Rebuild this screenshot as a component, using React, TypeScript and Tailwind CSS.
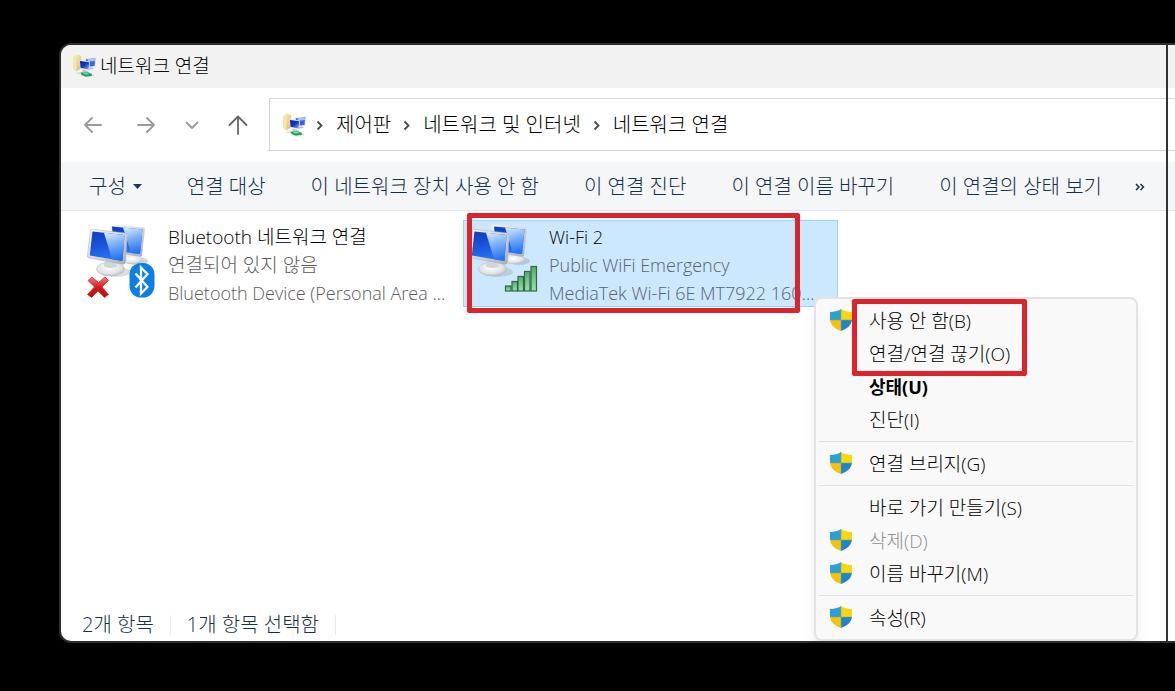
import React from "react";

function NetworkFolderIcon() {
  return (
    <svg width="24" height="24" viewBox="0 0 24 24" aria-hidden="true">
      <defs>
        <linearGradient id="folder" x1="0" y1="0" x2="1" y2="1">
          <stop offset="0" stopColor="#fff3c4" />
          <stop offset="1" stopColor="#dcb95a" />
        </linearGradient>
        <linearGradient id="smallScreen" x1="0" y1="0" x2="1" y2="1">
          <stop offset="0" stopColor="#0b1fa0" />
          <stop offset="0.5" stopColor="#1238c8" />
          <stop offset="1" stopColor="#8fb4f2" />
        </linearGradient>
      </defs>
      <path d="M1 2.500L5.500.5l3.500 1.500.5 12L4.500 17.500 1 15z" fill="url(#folder)" />
      <path d="M1 2.500l3 1.500.6 13.500L1 15z" fill="#f6e5ae" />
      <path d="M12.500 4.500l11.500-1-.8 9-9.700 1z" fill="#d3dcf2" />
      <path d="M14 5.200l9.200-.8-.7 7.600-8 .8z" fill="#3f66d6" />
      <path d="M15.500 5.100l7.700-.7-.2 2.500-7 .8z" fill="#a9c0f1" />
      <path d="M16 14l4-.8 2 1.500-5 1z" fill="#b6bfcd" />
      <path d="M7.500 6l10.500 1.500-.8 9L8 14.500z" fill="#dce3f0" />
      <path d="M8 7l9.200 1.200-.6 7.200-8.100-1.700z" fill="url(#smallScreen)" />
      <path d="M10.500 15.800l4 .8 2 1.200-6 .2z" fill="#b8c0cc" />
      <path d="M4.500 18.500h5l-.5 1.500H5zM18 21l4-.5v1.600l-4 .5z" fill="#c3ead9" />
      <path d="M8.500 18.500l7.500-.3 4 1.700-.4 2.100-6 .7-4-1.600z" fill="#1f9f60" />
      <path d="M10.500 19.200l4.500-.2 2.500 1-4 .5z" fill="#8ae0b2" />
    </svg>
  );
}

function ComputersIcon({ children }: { children?: React.ReactNode }) {
  return (
    <svg width="72" height="76" viewBox="0 0 72 76" className="shrink-0" aria-hidden="true">
      <defs>
        <linearGradient id="frame" x1="0" y1="0" x2="1" y2="1">
          <stop offset="0" stopColor="#f6f7f8" />
          <stop offset="0.5" stopColor="#d6d9dd" />
          <stop offset="1" stopColor="#a6abb2" />
        </linearGradient>
        <linearGradient id="screen" x1="0.3" y1="0" x2="0.5" y2="1">
          <stop offset="0" stopColor="#1140c0" />
          <stop offset="0.5" stopColor="#1a57dd" />
          <stop offset="1" stopColor="#2b78f0" />
        </linearGradient>
        <linearGradient id="shine" x1="0.2" y1="0" x2="0.4" y2="1">
          <stop offset="0" stopColor="#d6e8fd" />
          <stop offset="0.4" stopColor="#84b5fa" />
          <stop offset="1" stopColor="#2272f2" />
        </linearGradient>
        <radialGradient id="base" cx="0.45" cy="0.4" r="0.7">
          <stop offset="0" stopColor="#ffffff" />
          <stop offset="0.6" stopColor="#e0e2e5" />
          <stop offset="1" stopColor="#a8adb2" />
        </radialGradient>
        <linearGradient id="bars" x1="0" y1="0" x2="0" y2="1">
          <stop offset="0" stopColor="#5aa873" />
          <stop offset="1" stopColor="#9be0a8" />
        </linearGradient>
        <linearGradient id="cross" x1="0" y1="0" x2="0" y2="1">
          <stop offset="0" stopColor="#ee7a76" />
          <stop offset="0.5" stopColor="#d51a1a" />
          <stop offset="1" stopColor="#b80c0c" />
        </linearGradient>
      </defs>
      <ellipse cx="50" cy="37" rx="11" ry="4" fill="#9aa4ae" opacity="0.45" />
      <ellipse cx="45" cy="35.500" rx="11" ry="4.500" fill="url(#base)" />
      <path d="M23 1.500Q23 .5 24.500.5L56 3.500Q58 3.800 57.900 5.500L55 31Q54.700 33 53 32.800L27 29z" fill="url(#frame)" />
      <path d="M25 2.500l30.500 3-2.500 24.500L27 27z" fill="url(#screen)" />
      <path d="M36 3.600l19.500 1.900-2.500 24.500-9-1z" fill="url(#shine)" />
      <ellipse cx="29" cy="48" rx="15" ry="5" fill="#8c949c" opacity="0.3" />
      <ellipse cx="23.500" cy="45" rx="14" ry="7" fill="url(#base)" stroke="#b3b8bc" strokeWidth="0.500" />
      <path d="M18 37l11 1.500 1 4q-6 3-13 0z" fill="#d3d6d9" />
      <path d="M3.500 6.500Q3.800 5 5.500 5.200L38 9Q40.500 9.300 40.300 11.500L38.500 38Q38.200 40.500 36 40.200L2 34Q.2 33.500.4 31.500z" fill="url(#frame)" stroke="#aab0b7" strokeWidth="0.500" />
      <path d="M5.500 7.500L37.500 11 35.500 37 2.800 31.500z" fill="url(#screen)" />
      <path d="M17 8.800L37.500 11 35.500 37 25 35.200z" fill="url(#shine)" />
      {children}
    </svg>
  );
}

function DisconnectedBadges() {
  return (
    <>
      <path d="M1 56.500L5 53l6.500 5.500L18 53l3.500 3.500-6.500 6.500 6.500 7.500-4 3-6.500-6.500-6.500 6.500-4-3L7.500 63z" fill="url(#cross)" stroke="#c23634" strokeWidth="0.800" />
      <rect x="42.500" y="39" width="25" height="34.500" rx="11.500" fill="#0a7fe8" />
      <path d="M48.500 49.500l12 13.500-6.500 6.500v-26l6.500 6.500-12 13.500" fill="none" stroke="#fff" strokeWidth="2.300" />
    </>
  );
}

function SignalBadge() {
  return (
    <g fill="url(#bars)" stroke="#2c6a42" strokeWidth="1.200">
      <rect x="36.500" y="62" width="5.500" height="5" />
      <rect x="43" y="57.500" width="5.500" height="9.500" />
      <rect x="49" y="52.500" width="5.500" height="14.500" />
      <rect x="55.500" y="47.500" width="5.500" height="19.500" />
      <rect x="62" y="42.500" width="5.500" height="24.500" />
    </g>
  );
}

function ShieldIcon() {
  return (
    <svg width="22" height="22" viewBox="0 0 22 22" aria-hidden="true">
      <defs>
        <clipPath id="shieldShape">
          <path d="M11 0C13 1.700 17 2.900 22 3v7.500C21.500 16 17.500 19.700 11 22 4.500 19.700.5 16 0 10.500V3C5 2.900 9 1.700 11 0z" />
        </clipPath>
      </defs>
      <g clipPath="url(#shieldShape)">
        <path d="M0 0h11v11H0z" fill="#2b9fdc" />
        <path d="M11 0h11v11H11z" fill="#fbd60c" />
        <path d="M0 11h11v11H0z" fill="#f6c20d" />
        <path d="M11 11h11v11H11z" fill="#1f84cc" />
        <path d="M11 0v22M0 11h22" stroke="#7fae6a" strokeWidth="0.600" />
      </g>
    </svg>
  );
}

const navButton = "flex h-10 items-center justify-center";

function NavIcon({ d, color }: { d: string; color: string }) {
  return (
    <svg width="22" height="22" viewBox="0 0 22 22" fill="none" stroke={color} strokeWidth="1.800" strokeLinecap="round" strokeLinejoin="round" aria-hidden="true">
      <path d={d} />
    </svg>
  );
}

function Crumb({ label }: { label: string }) {
  return (
    <li className="flex items-center">
      <svg width="8" height="12" viewBox="0 0 8 12" fill="none" stroke="#4a4a4a" strokeWidth="1.800" aria-hidden="true">
        <path d="M1.500 2.500l4 4-4 4" />
      </svg>
      <a href="#" className="px-3">{label}</a>
    </li>
  );
}

const commands = ["연결 대상", "이 네트워크 장치 사용 안 함", "이 연결 진단", "이 연결 이름 바꾸기", "이 연결의 상태 보기"];

type Item = { label: string; shield?: boolean; bold?: boolean; disabled?: boolean };

const menuGroups: Item[][] = [
  [
    { label: "사용 안 함(B)", shield: true },
    { label: "연결/연결 끊기(O)" },
    { label: "상태(U)", bold: true },
    { label: "진단(I)" },
  ],
  [{ label: "연결 브리지(G)", shield: true }],
  [
    { label: "바로 가기 만들기(S)" },
    { label: "삭제(D)", shield: true, disabled: true },
    { label: "이름 바꾸기(M)", shield: true },
  ],
  [{ label: "속성(R)", shield: true }],
];

function ContextMenu() {
  return (
    <div role="menu" className="absolute left-[350px] top-[76px] z-10 w-[324px] rounded-lg border-2 border-[#e3e3e3] bg-[#f9f9f9] px-[3px] py-[5px] text-[19px] shadow-lg">
      {menuGroups.map((group, i) => (
        <div key={i} role="group" className={i ? "mt-[5px] border-t border-[#e1e1e1] pt-[5px]" : ""}>
          {group.map((item) => (
            <button
              key={item.label}
              role="menuitem"
              disabled={item.disabled}
              className={`flex h-[33px] w-full items-center gap-[17px] whitespace-nowrap pl-[11px] pt-px text-left ${item.bold ? "text-lg font-bold" : ""} ${item.disabled ? "text-[#909090]" : "text-black"}`}
            >
              <span className="h-[25px] w-[22px]">{item.shield && <ShieldIcon />}</span>
              {item.label}
            </button>
          ))}
        </div>
      ))}
      <div className="pointer-events-none absolute left-[36px] top-0 h-[77px] w-[175px] rounded-xs border-5 border-[#dd242c]" />
    </div>
  );
}

export default function App() {
  return (
    <div className="flex min-h-screen bg-black pb-[48px] pl-[59px] pt-[43px] font-['Open_Sans','Noto_Sans_CJK_KR',sans-serif] font-light text-black">
      <main className="relative flex min-w-0 flex-1 flex-col overflow-hidden rounded-l-xl border-2 border-r-0 border-[#2d2d2d] bg-white">
        <header className="flex h-[43px] shrink-0 items-center gap-1 bg-[#f2f2f2] pb-0.5 pl-[11px]">
          <NetworkFolderIcon />
          <h1 className="text-[19px] leading-7">네트워크 연결</h1>
        </header>

        <div className="flex h-[74px] shrink-0 items-center pb-px">
          <nav className="flex w-[208px] shrink-0 items-center pl-1">
            <button aria-label="뒤로" className={`${navButton} w-14`}><NavIcon color="#9a9a9a" d="M19 11H3M10 4l-7 7 7 7" /></button>
            <button aria-label="앞으로" className={`${navButton} w-[50px]`}><NavIcon color="#9a9a9a" d="M3 11h16M12 4l7 7-7 7" /></button>
            <button aria-label="최근 위치" className={`${navButton} w-[42px]`}><NavIcon color="#9a9a9a" d="M5.500 8.500L11 14l5.500-5.500" /></button>
            <button aria-label="위로" className={`${navButton} w-[50px]`}><NavIcon color="#666" d="M11 20V3M2.500 11L11 2.500l8.500 8.500" /></button>
          </nav>
          <div className="flex h-[53px] min-w-0 flex-1 items-center gap-[10px] border border-r-0 border-[#d6d6d6] pl-3">
            <NetworkFolderIcon />
            <ol className="flex items-center whitespace-nowrap text-[20px]">
              <Crumb label="제어판" />
              <Crumb label="네트워크 및 인터넷" />
              <Crumb label="네트워크 연결" />
            </ol>
          </div>
        </div>

        <div role="toolbar" className="flex h-[49px] shrink-0 items-center gap-[45px] whitespace-nowrap border-b border-[#e3e6e9] bg-[#f4f6f8] pl-7 pr-10 pt-px text-[20px] text-[#14304f]">
          <button className="flex items-center gap-[7px]">
            구성
            <svg width="9" height="5" viewBox="0 0 9 5" aria-hidden="true"><path d="M0 0h9L4.500 5z" fill="#1e395b" /></svg>
          </button>
          {commands.map((label) => (
            <button key={label}>{label}</button>
          ))}
          <button aria-label="추가 명령" className="-ml-3">
            <svg width="10" height="8" viewBox="0 0 10 8" fill="none" stroke="#1e2f4b" strokeWidth="1.500" aria-hidden="true">
              <path d="M1 1l3 3-3 3M5.500 1l3 3-3 3" />
            </svg>
          </button>
        </div>

        <ul className="flex flex-1 items-start gap-1 pl-[21px] pt-[9px] text-lg leading-7">
          <li className="flex h-[87px] w-[377px] shrink-0 border border-transparent pl-1 pt-0.5">
            <div className="pt-px"><ComputersIcon><DisconnectedBadges /></ComputersIcon></div>
            <div className="min-w-0 flex-1 whitespace-nowrap pl-[9px]">
              <p className="text-[19px]">Bluetooth 네트워크 연결</p>
              <p className="text-[19px] text-[#5c5c5c]">연결되어 있지 않음</p>
              <p className="text-[#5c5c5c]">Bluetooth Device (Personal Area ...</p>
            </div>
          </li>
          <li className="relative h-[87px] w-[375px] shrink-0 border border-[#99d1ff] bg-[#cce8ff]">
            <div className="flex pl-[5px] pt-0.5">
              <div className="pt-px"><ComputersIcon><SignalBadge /></ComputersIcon></div>
              <div className="min-w-0 flex-1 whitespace-nowrap pl-2">
                <p>Wi-Fi 2</p>
                <p className="text-[#566472]">Public WiFi Emergency</p>
                <p className="text-[#566472]">MediaTek Wi-Fi 6E MT7922 160...</p>
              </div>
            </div>
            <div className="pointer-events-none absolute left-[3px] top-[-8px] h-[100px] w-[333px] rounded-xs border-5 border-[#dd242c]" />
            <ContextMenu />
          </li>
        </ul>

        <footer className="flex h-8 shrink-0 items-center pl-[21px] text-[20px] text-[#14304f]">
          <span className="border-r border-[#ececec] pr-4 leading-5">2개 항목</span>
          <span className="border-r border-[#ececec] px-4 leading-5">1개 항목 선택함</span>
        </footer>
        <div className="pointer-events-none absolute inset-y-0 right-[7px] w-[2px] bg-[#333]" />
      </main>
    </div>
  );
}
